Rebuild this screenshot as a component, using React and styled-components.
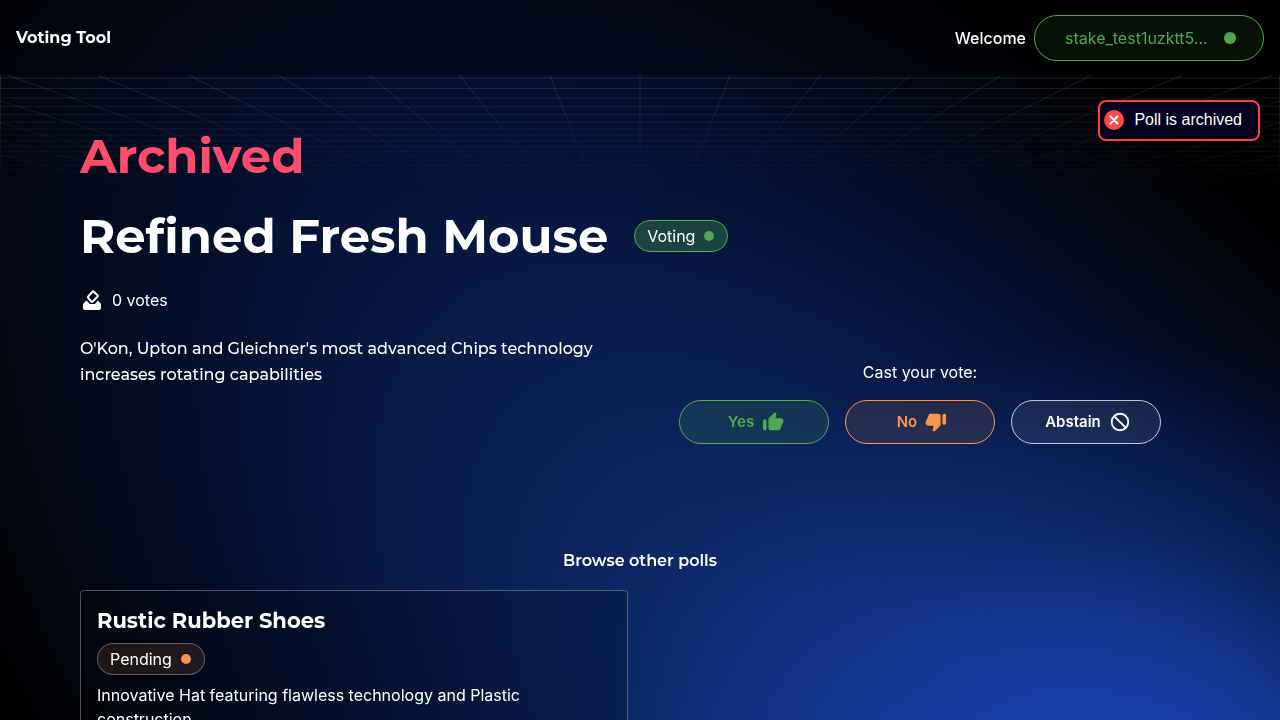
import React from "react";
import styled, { createGlobalStyle, css } from "styled-components";

const GlobalStyle = createGlobalStyle`
  *, *::before, *::after { box-sizing: border-box; }
  html { background: #000; scrollbar-width: none; }
  body {
    margin: 0;
    color: #fff;
    font-family: Inter, "Liberation Sans", sans-serif;
    font-size: 16px;
    line-height: 24px;
  }
  h1, h2, h3, p { margin: 0; }
`;

const display = css`
  font-family: Montserrat, Inter, "Liberation Sans", sans-serif;
`;

const Page = styled.div`
  position: relative;
  isolation: isolate;
  min-height: 100vh;
`;

const Glow = styled.svg`
  position: fixed;
  inset: 0;
  z-index: -2;
  width: 100%;
  height: 100vh;
`;

const GridFloor = styled.svg`
  position: absolute;
  top: 75px;
  left: 0;
  z-index: -1;
  width: 100%;
  fill: none;
  stroke: #fff;
  stroke-opacity: 0.11;
`;

const Header = styled.header`
  display: flex;
  align-items: center;
  justify-content: space-between;
  padding: 15px 16px 14px;
  background: rgba(0, 0, 0, 0.3);
`;

const Brand = styled.a`
  ${display}
  color: #fff;
  font-weight: 700;
  text-decoration: none;
`;

const Account = styled.div`
  display: flex;
  align-items: center;
  gap: 8px;
  font-weight: 500;
`;

const Dot = styled.span`
  flex: none;
  width: ${(p) => p.$size}px;
  height: ${(p) => p.$size}px;
  border-radius: 50%;
  background: ${(p) => p.$color};
`;

const WalletButton = styled.button`
  display: flex;
  align-items: center;
  justify-content: space-between;
  width: 230px;
  height: 46px;
  padding: 0 27px 0 30px;
  border: 1px solid #4fa84f;
  border-radius: 23px;
  background: rgba(79, 168, 79, 0.1);
  color: #4fa84f;
  font: inherit;
  font-weight: 400;
`;

const Toast = styled.div`
  position: fixed;
  top: 100px;
  right: 20px;
  display: flex;
  align-items: center;
  gap: 10px;
  height: 41px;
  padding: 0 16px 2px 4px;
  border: 2px solid #ff4136;
  border-radius: 8px;
  background: #00001e;
  font-family: "Liberation Sans", sans-serif;
`;

const Content = styled.main`
  padding: 45px 80px 24px;
`;

const Title = styled.h1`
  ${display}
  color: ${(p) => p.$color || "#fff"};
  font-size: 48px;
  font-weight: 700;
  line-height: 72px;
`;

const TitleRow = styled.div`
  display: flex;
  align-items: center;
  gap: 26px;
  margin-top: 8px;
`;

const Chip = styled.span`
  display: inline-flex;
  align-items: center;
  gap: 9px;
  height: 32px;
  padding: 0 13px 0 12px;
  border: 1px solid ${(p) => p.$border};
  border-radius: 16px;
  background: ${(p) => p.$fill};
`;

const Votes = styled.p`
  display: flex;
  align-items: center;
  gap: 8px;
  margin-top: 16px;
`;

const Details = styled.section`
  display: grid;
  grid-template-columns: 1fr 1fr;
  margin-top: 24px;
`;

const Description = styled.p`
  ${display}
  max-width: 560px;
  font-weight: 500;
  line-height: 26px;
`;

const Ballot = styled.div`
  display: flex;
  flex-direction: column;
  align-items: center;
  gap: 16px;
  padding-top: 24px;
`;

const Choices = styled.div`
  display: flex;
  gap: 16px;
`;

const Icon = styled.svg`
  flex: none;
  width: ${(p) => p.$size || 24}px;
  height: ${(p) => p.$size || 24}px;
  fill: currentColor;
`;

const Choice = styled.button`
  display: flex;
  align-items: center;
  justify-content: center;
  gap: 8px;
  width: 150px;
  height: 44px;
  padding: 0 0 0 4px;
  border: 1px solid ${(p) => p.$border || p.$color};
  border-radius: 22px;
  background: ${(p) => p.$fill};
  color: ${(p) => p.$color};
  font: inherit;
  font-size: 15px;
  font-weight: 600;
`;

const BrowseHeading = styled.h2`
  ${display}
  margin-top: 105px;
  font-size: 16px;
  font-weight: 600;
  text-align: center;
`;

const PollGrid = styled.div`
  display: grid;
  grid-template-columns: 1fr 1fr;
  gap: 24px;
  margin-top: 17px;
`;

const PollCard = styled.article`
  display: flex;
  flex-direction: column;
  align-items: flex-start;
  gap: 8px;
  padding: 16px;
  border: 1px solid rgba(255, 255, 255, 0.3);
  border-radius: 4px;
  background: rgba(0, 0, 0, 0.2);
`;

const PollName = styled.h3`
  ${display}
  font-size: 21px;
  font-weight: 700;
  line-height: 28px;
`;

const VANISH_Y = 225;
const rows = Array.from({ length: 24 }, (_, n) => VANISH_Y - 222 / (1 + 0.0495 * n));
const columns = Array.from({ length: 41 }, (_, n) => (n - 20) * 90.4);

function Backdrop() {
  return (
    <>
      <Glow viewBox="0 0 1280 720" preserveAspectRatio="none" aria-hidden="true">
        <defs>
          <radialGradient
            id="beam"
            gradientUnits="userSpaceOnUse"
            cx="0"
            cy="0"
            r="1"
            gradientTransform="translate(980 891) rotate(226.7) scale(1480 690)"
          >
            <stop offset="0" stopColor="#103080" />
            <stop offset="0.25" stopColor="#0e2a70" />
            <stop offset="0.45" stopColor="#0a1e50" />
            <stop offset="0.65" stopColor="#061233" />
            <stop offset="0.82" stopColor="#030817" />
            <stop offset="1" stopColor="#000" />
          </radialGradient>
          <radialGradient id="core" gradientUnits="userSpaceOnUse" cx="1120" cy="880" r="540">
            <stop offset="0" stopColor="#1848c4" />
            <stop offset="0.3" stopColor="#1848c4" stopOpacity="0.75" />
            <stop offset="0.65" stopColor="#1848c4" stopOpacity="0.25" />
            <stop offset="1" stopColor="#1848c4" stopOpacity="0" />
          </radialGradient>
        </defs>
        <rect width="1280" height="720" fill="url(#beam)" />
        <rect width="1280" height="720" fill="url(#core)" />
      </Glow>
      <GridFloor viewBox="0 0 1280 115" aria-hidden="true">
        <defs>
          <linearGradient id="fade" x2="0" y2="1">
            <stop offset="0" stopColor="#fff" />
            <stop offset="1" stopColor="#fff" stopOpacity="0" />
          </linearGradient>
          <mask id="floor" maskUnits="userSpaceOnUse" x="0" y="0" width="1280" height="115">
            <rect width="1280" height="115" fill="url(#fade)" stroke="none" />
          </mask>
        </defs>
        <g mask="url(#floor)">
          {rows.map((y) => (
            <path key={y} d={`M0 ${y}H1280`} />
          ))}
          {columns.map((x) => (
            <path key={x} d={`M${640 + x} 0L640 ${VANISH_Y}`} />
          ))}
          <path d="M.5 0V115M1279.5 0V115" />
        </g>
      </GridFloor>
    </>
  );
}

const THUMB =
  "M13.12 2.06 7.58 7.6c-.37.37-.58.88-.58 1.41V19c0 1.1.9 2 2 2h9c.8 0 1.52-.48 1.84-1.21l3.26-7.61C23.94 10.2 22.49 8 20.34 8h-5.65l.95-4.58c.1-.5-.05-1.01-.41-1.37-.59-.58-1.53-.58-2.11.01zM3 21c1.1 0 2-.9 2-2v-8c0-1.1-.9-2-2-2s-2 .9-2 2v8c0 1.1.9 2 2 2z";

export default function App() {
  return (
    <Page>
      <GlobalStyle />
      <Backdrop />
      <Header>
        <Brand href="#">Voting Tool</Brand>
        <Account>
          Welcome
          <WalletButton type="button">
            stake_test1uzktt5...
            <Dot $size={12} $color="#4fa84f" />
          </WalletButton>
        </Account>
      </Header>
      <Toast role="status">
        <svg width="20" height="20" viewBox="0 0 20 20" aria-hidden="true">
          <circle cx="10" cy="10" r="10" fill="#ff4b4b" />
          <path
            d="M6.500 6.500l7 7M13.500 6.500l-7 7"
            stroke="#fff"
            strokeWidth="2"
            strokeLinecap="round"
          />
        </svg>
        Poll is archived
      </Toast>
      <Content>
        <Title as="p" $color="#ff4c6c">Archived</Title>
        <TitleRow>
          <Title>Refined Fresh Mouse</Title>
          <Chip $border="#4fa84f" $fill="rgba(79, 168, 79, 0.3)">
            Voting
            <Dot $size={10} $color="#4fa84f" />
          </Chip>
        </TitleRow>
        <Votes>
          <Icon viewBox="0 0 24 24" aria-hidden="true">
            <path d="M3.500 15.600 5.800 13h1.400l2.600 3h5l2.600-3h1l2.200 2.600c.3.400.4.700.4 1.200V20a2 2 0 0 1-2 2H5a2 2 0 0 1-2-2v-3.200c0-.5.200-.9.500-1.200z" />
            <path
              d="M12.500 3.700a1 1 0 0 1 1.400 0l3.600 3.600a1 1 0 0 1 0 1.400l-4.800 4.800a1 1 0 0 1-1.400 0L8.200 9.900a1 1 0 0 1 0-1.400z"
              fill="none"
              stroke="currentColor"
              strokeWidth="2"
            />
          </Icon>
          0 votes
        </Votes>
        <Details>
          <Description>
            O'Kon, Upton and Gleichner's most advanced Chips technology increases rotating
            capabilities
          </Description>
          <Ballot>
            <p>Cast your vote:</p>
            <Choices>
              <Choice type="button" $color="#4fa84f" $fill="rgba(79, 168, 79, 0.15)">
                Yes
                <Icon $size={22} viewBox="0 0 24 24" aria-hidden="true">
                  <path d={THUMB} />
                </Icon>
              </Choice>
              <Choice type="button" $color="#f7954a" $fill="rgba(247, 149, 74, 0.12)">
                No
                <Icon $size={22} viewBox="0 0 24 24" aria-hidden="true">
                  <path d={THUMB} transform="rotate(180 12 12)" />
                </Icon>
              </Choice>
              <Choice type="button" $color="#fff" $border="#c3c8d6" $fill="rgba(255, 255, 255, 0.07)">
                Abstain
                <Icon $size={22} viewBox="0 0 24 24" aria-hidden="true">
                  <path d="M12 2C6.480 2 2 6.480 2 12s4.480 10 10 10 10-4.480 10-10S17.520 2 12 2zM4 12c0-4.420 3.580-8 8-8 1.850 0 3.550.630 4.900 1.690L5.690 16.900A7.900 7.900 0 0 1 4 12zm8 8a7.900 7.900 0 0 1-4.900-1.690L18.310 7.100A7.900 7.900 0 0 1 20 12c0 4.420-3.580 8-8 8z" transform="matrix(-1 0 0 1 24 0)" />
                </Icon>
              </Choice>
            </Choices>
          </Ballot>
        </Details>
        <BrowseHeading>Browse other polls</BrowseHeading>
        <PollGrid>
          <PollCard>
            <PollName>Rustic Rubber Shoes</PollName>
            <Chip $border="rgba(255, 255, 255, 0.3)" $fill="rgba(247, 149, 74, 0.12)">
              Pending
              <Dot $size={10} $color="#f7954a" />
            </Chip>
            <p>Innovative Hat featuring flawless technology and Plastic construction</p>
          </PollCard>
        </PollGrid>
      </Content>
    </Page>
  );
}
